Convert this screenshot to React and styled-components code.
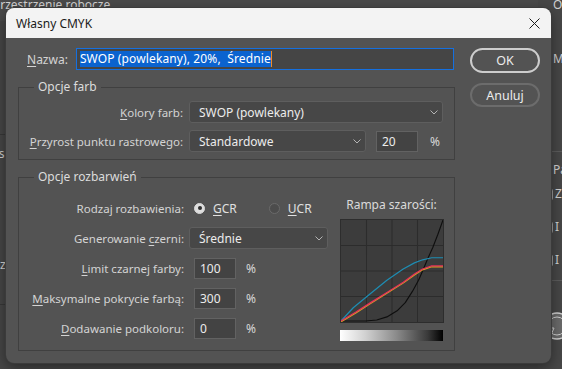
import React from 'react';
import styled, { createGlobalStyle } from 'styled-components';

const FONT = `"Noto Sans", "Open Sans", "Liberation Sans", sans-serif`;

const GlobalStyle = createGlobalStyle`
  html, body {
    margin: 0;
    padding: 0;
    background: #464646;
  }
  body {
    font-family: ${FONT};
    font-size: 12px;
  }
`;

/* ---------- workspace behind the dialog ---------- */

const Page = styled.div`
  position: relative;
  width: 562px;
  height: 369px;
  overflow: hidden;
  display: flex;
  background: #464646;
  color: #d2d2d2;
`;

const LeftArea = styled.div`
  flex: 1;
  display: flex;
  flex-direction: column;
`;

const TopBar = styled.div`
  height: 24px;
  background: #4a4a4a;
  line-height: 16px;
  margin-top: -3px;
  white-space: nowrap;
  text-indent: -7px;
`;

const Section = styled.div`
  height: ${(p) => p.h}px;
  border-bottom: 1px solid #383838;
  padding-top: ${(p) => p.pt || 0}px;
  box-sizing: border-box;
  white-space: nowrap;
  text-indent: -8px;
  line-height: 16px;
`;

const RightStrip = styled.div`
  width: 24px;
  display: flex;
  flex-direction: column;
  background: #474747;
  white-space: nowrap;
  line-height: 16px;
`;

const StripText = styled.div`
  padding-left: 15px;
  margin-top: ${(p) => p.mt || 0}px;
`;

const StripLine = styled.div`
  height: 1px;
  background: #5c5c5c;
  margin-top: ${(p) => p.mt || 0}px;
`;

const StripCheck = styled.div`
  display: flex;
  align-items: center;
  gap: 2px;
  padding-left: 4px;
  margin-top: ${(p) => p.mt || 0}px;
`;

const CheckBox = styled.span`
  width: 9px;
  height: 11px;
  border: 1px solid #9a9a9a;
  border-radius: 3px;
  background: ${(p) => (p.on ? '#bdbdbd' : 'transparent')};
`;

const WheelIcon = styled.svg`
  margin-top: ${(p) => p.mt || 0}px;
  margin-left: 4px;
`;

/* ---------- dialog ---------- */

const Dialog = styled.div`
  position: absolute;
  left: 6px;
  top: 8px;
  width: 545px;
  height: 355px;
  background: #535353;
  border-radius: 8px;
  box-shadow: 0 0 0 1px #3b3b3b, 0 4px 14px rgba(0, 0, 0, 0.45);
  overflow: hidden;
  display: flex;
  flex-direction: column;
  color: #d4d4d4;
  font-family: ${FONT};
  font-size: 12px;
`;

const TitleBar = styled.div`
  height: 30px;
  flex-shrink: 0;
  background: #f3f3f3;
  display: flex;
  align-items: center;
  justify-content: space-between;
  padding: 0 11px 0 10px;
  color: #1b1b1b;
`;

const Body = styled.div`
  display: grid;
  grid-template-columns: 437px 70px;
  column-gap: 15px;
  padding: 10px 11px 12px 12px;
`;

const MainCol = styled.div`
  display: flex;
  flex-direction: column;
`;

const ButtonCol = styled.div`
  display: flex;
  flex-direction: column;
  gap: 10px;
`;

const Button = styled.button`
  height: ${(p) => (p.primary ? 25 : 24)}px;
  border-radius: 13px;
  border: 2px solid ${(p) => (p.primary ? '#cdcdcd' : '#6c6c6c')};
  background: transparent;
  color: #ececec;
  font-family: ${FONT};
  font-size: 12.5px;
  padding: 0;
`;

const Key = styled.span`
  text-decoration: underline;
  text-underline-offset: 2px;
`;

const NameRow = styled.div`
  display: flex;
  align-items: center;
  gap: 8px;
  padding-left: 9px;
  padding-right: 1px;
  height: 22px;
`;

const NameInput = styled.div`
  flex: 1;
  height: 22px;
  box-sizing: border-box;
  border: 1px solid #1570e0;
  background: #454545;
  display: flex;
  align-items: center;
  padding-left: 3px;
`;

const Selected = styled.span`
  background: #0b63cf;
  color: #ffffff;
  white-space: pre;
  line-height: 16px;
  letter-spacing: 0.12px;
`;

const Caret = styled.span`
  width: 1px;
  height: 16px;
  background: #f08a24;
`;

const Group = styled.fieldset`
  margin: 9px 0 0 0;
  min-width: 0;
  border: 1px solid #404040;
  padding: ${(p) => p.pad};
`;

const Legend = styled.legend`
  padding: 0 4px;
  margin-left: 5px;
  line-height: 16px;
  color: #dcdcdc;
`;

const FormGrid = styled.div`
  display: grid;
  grid-template-columns: ${(p) => p.labelWidth}px auto;
  column-gap: ${(p) => p.gap}px;
  row-gap: ${(p) => p.rowGap}px;
  grid-auto-rows: 22px;
  align-items: center;
`;

const Label = styled.div`
  text-align: right;
  white-space: nowrap;
  font-size: 11.5px;
`;

const Controls = styled.div`
  display: flex;
  align-items: center;
`;

const Select = styled.div`
  width: ${(p) => p.w}px;
  height: 22px;
  box-sizing: border-box;
  border: 1px solid #5e5e5e;
  border-radius: 3px;
  background: #474747;
  color: #ececec;
  display: flex;
  align-items: center;
  justify-content: space-between;
  padding: 0 4px 0 9px;
`;

const NumInput = styled.div`
  width: 42px;
  height: 21px;
  box-sizing: border-box;
  margin-left: ${(p) => p.ml}px;
  border: 1px solid #626262;
  background: #434343;
  color: #ececec;
  display: flex;
  align-items: center;
  padding-left: 5px;
`;

const Percent = styled.span`
  margin-left: ${(p) => p.ml}px;
  color: #d8d8d8;
`;

const RadioItem = styled.label`
  display: flex;
  align-items: center;
  gap: 8px;
  margin-left: ${(p) => p.ml}px;
  color: #e0e0e0;
`;

const RadioDot = styled.span`
  width: 11px;
  height: 11px;
  border-radius: 50%;
  box-sizing: border-box;
  border: 1px solid ${(p) => (p.checked ? '#d8d8d8' : '#6a6a6a')};
  background: ${(p) => (p.checked ? '#dedede' : '#4c4c4c')};
  display: flex;
  align-items: center;
  justify-content: center;

  &::after {
    content: '';
    width: 4px;
    height: 4px;
    border-radius: 50%;
    background: ${(p) => (p.checked ? '#2e2e2e' : 'transparent')};
  }
`;

const SepRow = styled.div`
  display: flex;
`;

const Ramp = styled.div`
  margin-left: auto;
  width: 103px;
  display: flex;
  flex-direction: column;
  align-items: center;
`;

const RampTitle = styled.div`
  line-height: 16px;
  color: #dadada;
  white-space: nowrap;
`;

const Chart = styled.svg`
  display: block;
  margin-top: 7px;
  background: #3c3c3c;
  outline: 1px solid #2d2d2d;
`;

const GrayBar = styled.div`
  width: 103px;
  height: 11px;
  margin-top: 8px;
  background: linear-gradient(to right, #ffffff 0%, #d0d0d0 25%, #8a8a8a 55%, #3a3a3a 85%, #000000 100%);
`;

const Chevron = () => (
  <svg width="8" height="5" viewBox="0 0 8 5">
    <polyline points="0.5,0.5 4,4 7.5,0.5" fill="none" stroke="#b4b4b4" strokeWidth="1" />
  </svg>
);

const curves = {
  cyan: '0,99 12,86 29,72 45,59 61,48 72,42 80,39 89,37 100,37',
  magenta: '0,99 15,90 29,81 45,71 61,61 72,53 80,48 89,45 100,45',
  black: '0,99 24,99 35,98 45,95 55,89 63,81 70,70 76,59 80,50 85,38 90,27 95,14 100,0',
};

const GrayChart = () => (
  <Chart width="102" height="102" viewBox="0 0 100 100" preserveAspectRatio="none">
    {[25, 50, 75].map((v) => (
      <g key={v}>
        <line x1={v} y1="0" x2={v} y2="100" stroke="#2c2c2c" strokeWidth="1" />
        <line x1="0" y1={v} x2="100" y2={v} stroke="#2c2c2c" strokeWidth="1" />
      </g>
    ))}
    <polyline points={curves.black} fill="none" stroke="#0e0e0e" strokeWidth="1.1" strokeLinejoin="round" />
    <polyline points={curves.cyan} fill="none" stroke="#1e8db3" strokeWidth="1.2" strokeLinejoin="round" />
    <polyline points={curves.magenta} fill="none" stroke="#d9a423" strokeWidth="1.1" strokeLinejoin="round" transform="translate(0,0.9)" />
    <polyline points={curves.magenta} fill="none" stroke="#e5315a" strokeWidth="1.2" strokeLinejoin="round" />
  </Chart>
);

export default function App() {
  return (
    <>
      <GlobalStyle />
      <Page>
        <LeftArea>
          <TopBar>Przestrzenie robocze</TopBar>
          <Section h={114} />
          <Section h={170} pt={11}>
            as
            <div style={{ height: 95 }} />
            z
          </Section>
        </LeftArea>
        <RightStrip>
          <StripText mt={-3}>Opcje</StripText>
          <StripText mt={38}>Metoda</StripText>
          <StripLine mt={84} />
          <StripText mt={10}>Pa</StripText>
          <StripCheck mt={8}><CheckBox />Z</StripCheck>
          <StripCheck mt={17}><CheckBox />I</StripCheck>
          <StripCheck mt={17}><CheckBox on />I</StripCheck>
          <StripLine mt={12} />
          <WheelIcon mt={30} width="30" height="30" viewBox="0 0 30 30">
            <circle cx="15" cy="15" r="13" fill="#6a6a6a" stroke="#d0d0d0" strokeWidth="1.5" />
            <circle cx="15" cy="15" r="9" fill="none" stroke="#d0d0d0" strokeWidth="1" />
            <path d="M4 17 L12 17 L9 24" fill="none" stroke="#d0d0d0" strokeWidth="1" />
          </WheelIcon>
        </RightStrip>

        <Dialog>
          <TitleBar>
            <span>Własny CMYK</span>
            <svg width="11" height="11" viewBox="0 0 11 11">
              <path d="M0.5 0.5 L10.5 10.5 M10.5 0.5 L0.5 10.5" stroke="#1b1b1b" strokeWidth="1" />
            </svg>
          </TitleBar>
          <Body>
            <MainCol>
              <NameRow>
                <span><Key>N</Key>azwa:</span>
                <NameInput>
                  <Selected>SWOP (powlekany), 20%,  Średnie</Selected>
                  <Caret />
                </NameInput>
              </NameRow>

              <Group pad="0 11px 7px 10px">
                <Legend>Opcje farb</Legend>
                <FormGrid labelWidth={154} gap={6} rowGap={7} style={{ marginTop: 6 }}>
                  <Label><Key>K</Key>olory farb:</Label>
                  <Controls>
                    <Select w={254}>SWOP (powlekany)<Chevron /></Select>
                  </Controls>
                  <Label><Key>P</Key>rzyrost punktu rastrowego:</Label>
                  <Controls>
                    <Select w={177}>Standardowe<Chevron /></Select>
                    <NumInput ml={10}>20</NumInput>
                    <Percent ml={12}>%</Percent>
                  </Controls>
                </FormGrid>
              </Group>

              <Group pad="12px 11px 9px 10px">
                <Legend>Opcje rozbarwień</Legend>
                <SepRow>
                  <FormGrid labelWidth={155} gap={5} rowGap={8}>
                    <Label>Rodzaj rozbawienia:</Label>
                    <Controls>
                      <RadioItem ml={5}><RadioDot checked /><span><Key>G</Key>CR</span></RadioItem>
                      <RadioItem ml={32}><RadioDot /><span><Key>U</Key>CR</span></RadioItem>
                    </Controls>
                    <Label>Generowanie <Key>c</Key>zerni:</Label>
                    <Controls>
                      <Select w={139}>Średnie<Chevron /></Select>
                    </Controls>
                    <Label><Key>L</Key>imit czarnej farby:</Label>
                    <Controls>
                      <NumInput ml={5}>100</NumInput>
                      <Percent ml={10}>%</Percent>
                    </Controls>
                    <Label><Key>M</Key>aksymalne pokrycie farbą:</Label>
                    <Controls>
                      <NumInput ml={5}>300</NumInput>
                      <Percent ml={10}>%</Percent>
                    </Controls>
                    <Label><Key>D</Key>odawanie podkoloru:</Label>
                    <Controls>
                      <NumInput ml={5}>0</NumInput>
                      <Percent ml={10}>%</Percent>
                    </Controls>
                  </FormGrid>
                  <Ramp>
                    <RampTitle>Rampa szarości:</RampTitle>
                    <GrayChart />
                    <GrayBar />
                  </Ramp>
                </SepRow>
              </Group>
            </MainCol>

            <ButtonCol>
              <Button primary>OK</Button>
              <Button>Anuluj</Button>
            </ButtonCol>
          </Body>
        </Dialog>
      </Page>
    </>
  );
}
